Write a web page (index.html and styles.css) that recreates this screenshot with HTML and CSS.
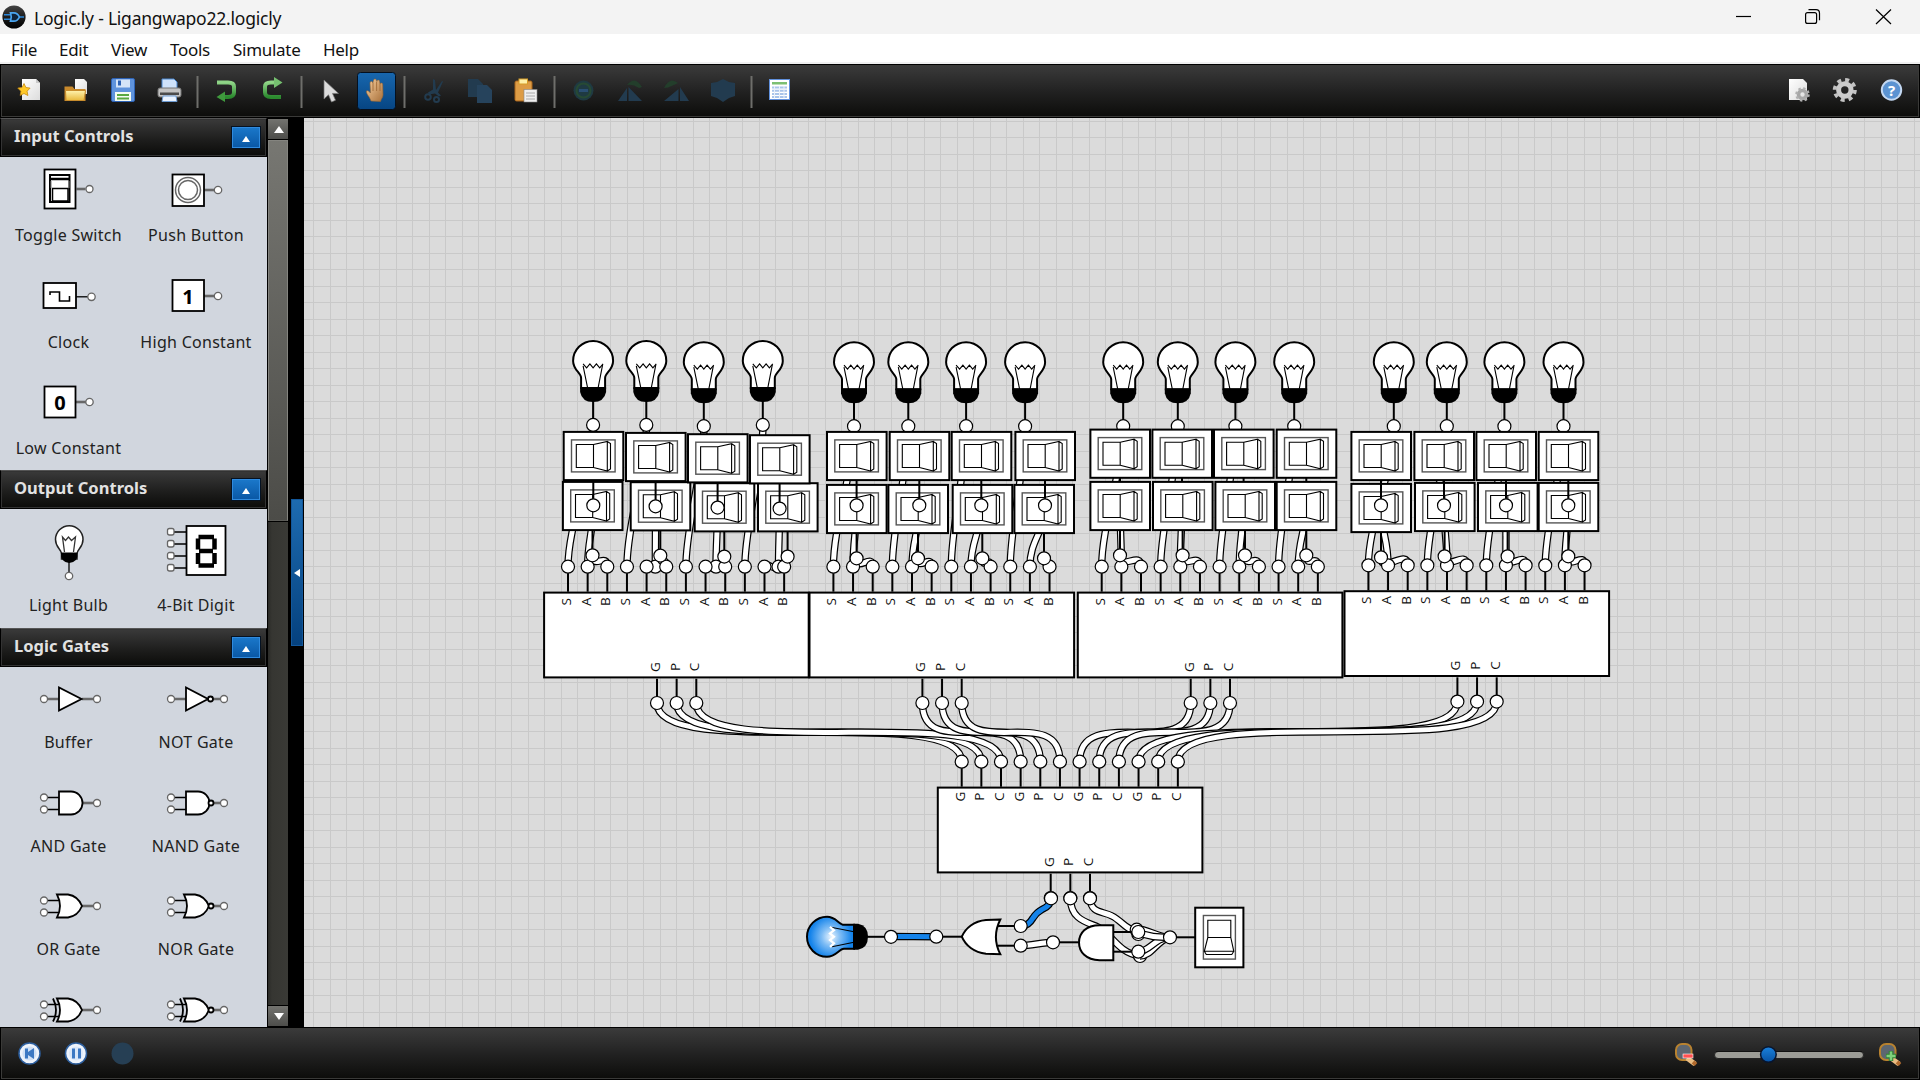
FILE: index.html
```html
<!DOCTYPE html>
<html lang="en">
<head>
<meta charset="utf-8">
<title>Logic.ly - Ligangwapo22.logicly</title>
<link rel="stylesheet" href="styles.css">
</head>
<body>
<div class="window">
  <header class="titlebar">
    <svg class="app-icon" viewBox="0 0 24 24" width="24" height="24">
      <defs><linearGradient id="app" x2="0" y2="1"><stop offset="0" stop-color="#444"/><stop offset=".5" stop-color="#1c1c1c"/><stop offset="1" stop-color="#000"/></linearGradient></defs>
      <circle cx="12" cy="12" r="11.6" fill="url(#app)"/>
      <path d="M2 9.7h6.5M2 14.3h6.5M17 12h5" stroke="#2b86d8" stroke-width="1.6" fill="none"/>
      <path d="M8.5 7.8h3.3c3 0 4.8 2.200 5.600 4.200-.8 2-2.600 4.200-5.600 4.200H8.500c1-2.800 1-5.600 0-8.400z" stroke="#4aa5f0" stroke-width="1.700" fill="#10243a"/>
    </svg>
    <span class="title">Logic.ly - Ligangwapo22.logicly</span>
    <span class="spacer"></span>
    <svg class="caption" viewBox="0 0 160 34" width="160" height="34" fill="none" stroke="#000" stroke-width="1.2">
      <path d="M0 16.500h15"/>
      <rect x="69.600" y="12.600" width="11" height="10.800" rx="2"/>
      <path d="M72.500 9.700h7.500q3.500 0 3.500 3.500v7"/>
      <path d="M140 9.500l15 14.500M155 9.500l-15 14.500"/>
    </svg>
  </header>
  <nav class="menubar">
    <span class="m-file">File</span><span class="m-edit">Edit</span><span class="m-view">View</span><span class="m-tools">Tools</span><span class="m-sim">Simulate</span><span class="m-help">Help</span>
  </nav>

  <div class="toolbar">
    <svg class="tools" viewBox="0 0 820 50" width="820" height="50">
      <defs>
        <linearGradient id="paper" x2="1" y2="1"><stop offset="0" stop-color="#fff"/><stop offset="1" stop-color="#dcdcdc"/></linearGradient>
        <linearGradient id="folder" x2="0" y2="1"><stop offset="0" stop-color="#fff3ae"/><stop offset="1" stop-color="#e8b93c"/></linearGradient>
        <linearGradient id="blue" x2="0" y2="1"><stop offset="0" stop-color="#1867ae"/><stop offset="1" stop-color="#064583"/></linearGradient>
        <linearGradient id="hand" x2="1" y2="1"><stop offset="0" stop-color="#f7cf9f"/><stop offset="1" stop-color="#a8703a"/></linearGradient>
        <linearGradient id="grn" x2="0" y2="1"><stop offset="0" stop-color="#8fd487"/><stop offset="1" stop-color="#2b8a2e"/></linearGradient>
      </defs>
      <!-- new -->
      <path d="M22 14h14l4 4v17H22z" fill="url(#paper)"/><path d="M36 14l4 4h-4z" fill="#c9c9c9"/>
      <path d="M24 18.500l1.900 4 4.200.6-3 3.100.8 4.300-3.900-2-3.800 2 .7-4.300-3.100-3.100 4.300-.6z" fill="#ffc928" stroke="#c88a10" stroke-width=".8"/>
      <!-- open -->
      <path d="M75 14h9l3 3v12H75z" fill="url(#paper)"/>
      <path d="M64.500 21.500h8l2 2.500h11v12H64.500z" fill="#c98a2c"/><path d="M65.500 25.500h20l-1.500 10H66z" fill="url(#folder)" stroke="#c78c2c"/>
      <!-- save -->
      <rect x="111.500" y="13.500" width="23" height="23" rx="1.500" fill="#5f93dc" stroke="#2d62b5"/>
      <rect x="116" y="14.500" width="14" height="8" fill="#d5e4f8"/><rect x="118" y="15.500" width="3" height="5" fill="#2d62b5"/>
      <rect x="115" y="27" width="16" height="9" fill="#f4fbf2"/><path d="M117 30h12M117 33.500h12" stroke="#58a840" stroke-width="2"/>
      <!-- print -->
      <path d="M162 14h12l3 3v9h-15z" fill="#cfe2fa" stroke="#4a87d0"/>
      <rect x="158" y="23" width="23" height="9" rx="2" fill="#c3c3c3" stroke="#777"/><rect x="160" y="27.500" width="19" height="2.500" fill="#4b4b4b"/>
      <path d="M163 31h13l1 5.500h-15z" fill="#eaf3ff" stroke="#6d9bd2"/>
      <g class="rule"><path d="M197.500 11v32M301.500 11v32M404.500 11v32M554.500 11v32M751.500 11v32"/></g>
      <!-- undo / redo -->
      <path d="M217 17.500h11q6 0 6 4v6q0 4.500-6 4.500h-4" fill="none" stroke="url(#grn)" stroke-width="4"/><path d="M225 26.500v10.500l-8.500-5z" fill="#3f9a3d"/>
      <path d="M281 32h-10q-6 0-6-4.500v-6q0-4 6-4h4" fill="none" stroke="url(#grn)" stroke-width="4"/><path d="M274 12v11l8.500-5.500z" fill="#76c070"/>
      <!-- pointer -->
      <path d="M324 15v19l4.500-4.200 3 7.200 4-1.800-3-6.800h6z" fill="#dcdcdc" stroke="#777" stroke-width=".7"/>
      <!-- pan -->
      <rect x="357.500" y="7.500" width="38" height="37" rx="3" fill="url(#blue)" stroke="#04101f"/>
      <path d="M371 36c-1-4-5-7-4.500-10 1.500-1 3 1 4 2l-.5-10c.3-2 2.500-2 2.800 0l.7-2.500c.4-2 2.700-2 2.900 0l.5 1c.6-2 2.600-2 2.800.5l.3 2c.8-1.500 2.800-1.200 2.700.8L383 30c-.3 3-2 4-2.500 6.500z" fill="url(#hand)" stroke="#9a6630" stroke-width=".6"/>
      <path d="M373 18v8M376.600 17v9M380 19v7" stroke="#a06b38" stroke-width=".9"/>
      <!-- disabled edit tools -->
      <g fill="#223b4f" stroke="none">
        <path d="M433 14l2 1 1 10 6-9 1 .5-5 11 3 3-2 1-4-3-6 1-1-2 5-3z"/><circle cx="428" cy="32" r="2.800" fill="none" stroke="#223b4f" stroke-width="2"/><circle cx="436.500" cy="34.500" r="2.500" fill="none" stroke="#223b4f" stroke-width="2"/>
        <path d="M468 14h10l5 5v13h-15z"/><path d="M477 20h10l5 5v13h-15z" fill="#26435c"/>
        <circle cx="583.500" cy="25.500" r="10" fill="#1f3a42"/><circle cx="583.500" cy="25.500" r="7" fill="none" stroke="#274a34" stroke-width="2"/><path d="M579 25.500h9" stroke="#2a4f73" stroke-width="3"/>
        <path d="M618 36l9-13v13zM628.500 22l13.500 14h-13.500z"/><path d="M627 20q8-10 15 2l-3 1q-6-4-12-3z" fill="#233e2b"/>
        <path d="M689 36l-9-14v14zM678.500 24L664 36h14.500z"/><path d="M678 18q-8-7-14 5l4-.5q5-2 10-4.500z" fill="#233e2b"/>
        <path d="M711 18l6-1 6-3 6 3 6 1v13l-6 2-6 4-6-4-6-2z"/>
      </g>
      <!-- paste -->
      <rect x="515" y="16" width="17" height="20" rx="1.500" fill="#dd9c45" stroke="#a9651b"/><rect x="519" y="14" width="8.500" height="5" fill="#fff0a8" stroke="#d79d28"/>
      <rect x="524" y="24.500" width="13" height="12.500" fill="#efefef" stroke="#888" stroke-width=".6"/><path d="M526 28h9M526 31h9M526 34h9" stroke="#aaa"/>
      <!-- truth table -->
      <rect x="769.500" y="14.500" width="20" height="20" fill="#fff" stroke="#6090dc"/><rect x="772" y="17" width="15" height="2.500" fill="#7cbf72"/>
      <path d="M772 22.500h15M772 25.700h15M772 28.900h15M772 32h15" stroke="#a9c4ea" stroke-width="2"/><path d="M774.500 21v12.500M779.500 21v12.500M784 21v12.500" stroke="#e8f0fb"/>
    </svg>
    <span class="spacer"></span>
    <svg class="tools" viewBox="0 0 120 50" width="120" height="50">
      <path d="M2 14h14l4 4v17H2z" fill="url(#paper)"/>
      <circle cx="15.500" cy="29.500" r="4" fill="none" stroke="#a7a7a7" stroke-width="3.600"/><circle cx="15.500" cy="29.500" r="6" fill="none" stroke="#b0b0b0" stroke-width="2.500" stroke-dasharray="2.350 2.350"/>
      <circle cx="57.800" cy="25" r="6.200" fill="none" stroke="#cbcbcb" stroke-width="5"/><circle cx="57.800" cy="25" r="10" fill="none" stroke="#c3c3c3" stroke-width="4" stroke-dasharray="3.930 3.930"/>
      <circle cx="104.500" cy="25" r="9.700" fill="#5b93d2" stroke="#c3d8f2" stroke-width="2"/><text x="104.500" y="30.500" class="help">?</text>
    </svg>
  </div>

  <main class="body">
    <aside class="library">
      <section class="group inputs">
        <h2>Input Controls<span class="fold"></span></h2>
        <div class="cells">
          <div class="cell"><svg viewBox="-32 -32 64 64"><path class="s2" d="M8.500 0h9"/><rect class="s" x="-23.500" y="-19.500" width="31" height="39"/><rect x="-18" y="-14" width="19.500" height="27" fill="#fff" stroke="#000" stroke-width="2"/><path d="M-18-10h20" stroke="#000" stroke-width="2.500"/><rect x="-15.500" y="-.5" width="15.500" height="12.500" fill="#fff" stroke="#000" stroke-width="1.500"/><path d="M-17-8v7M1-8v7" stroke="#777"/><circle class="p" cx="21.500" cy="0" r="3.500"/></svg><b>Toggle Switch</b></div>
          <div class="cell"><svg viewBox="-32 -32 64 64"><path class="s2" d="M8 1h10"/><rect class="s" x="-23.500" y="-14.500" width="31.500" height="31.500"/><circle class="t" cx="-8" cy="1" r="12.500"/><circle class="t" cx="-8" cy="1" r="9.500"/><circle class="p" cx="22" cy="1" r="3.700"/></svg><b>Push Button</b></div>
          <div class="cell"><svg viewBox="-32 -32 64 64"><path class="s1" stroke-width="2" d="M8 .8h12"/><rect class="s" x="-24.500" y="-13" width="32.500" height="25"/><path d="M-18-1v-3h9.500v9h10v-5" fill="none" stroke="#000" stroke-width="1.600"/><circle class="p" cx="23.500" cy=".8" r="3.700"/></svg><b>Clock</b></div>
          <div class="cell"><svg viewBox="-32 -32 64 64"><path class="s2" d="M8 0h10"/><rect class="s" x="-23.500" y="-16" width="31.500" height="31"/><text x="-8" y="7.500">1</text><circle class="p" cx="22" cy="0" r="3.700"/></svg><b>High Constant</b></div>
          <div class="cell"><svg viewBox="-32 -32 64 64"><path class="s2" d="M8 0h10"/><rect class="s" x="-23.500" y="-15.500" width="31" height="31"/><text x="-8" y="7.500">0</text><circle class="p" cx="21.500" cy="0" r="3.700"/></svg><b>Low Constant</b></div>
        </div>
      </section>
      <section class="group outputs">
        <h2>Output Controls<span class="fold"></span></h2>
        <div class="cells">
          <div class="cell"><svg viewBox="-32 -41 64 82"><path class="s1" stroke-width="2" d="M0 11v14"/><path d="M-7.500 4c0-5-6-6-6-14.500a13.700 13.700 0 0 1 27.500 0c0 8.500-6 9.500-6 14.500v5h-15.500z" fill="#fff" stroke="#222" stroke-width="1.500"/><path d="M-8 2.500h16.500q1 9.500-8.300 10.500q-9-1-8.200-10.500z"/><path d="M-4.500 2l-2-15 3 3.500 3-3.500 3 3.500 4-3.500-2 15" fill="none" stroke="#333" stroke-width="1.300"/><circle class="p" cx="0" cy="26" r="3.700"/></svg><b>Light Bulb</b></div>
          <div class="cell"><svg viewBox="-32 -41 64 82"><path class="s1" d="M-22-18h13M-22-6h13M-22 6h13M-22 18h13"/><rect class="s" x="-9.500" y="-24" width="39" height="49"/><g class="p"><rect x="-28.500" y="-21.500" width="6.500" height="6.500" rx="2"/><rect x="-28.500" y="-9.500" width="6.500" height="6.500" rx="2"/><rect x="-28.500" y="2.500" width="6.500" height="6.500" rx="2"/><rect x="-28.500" y="14.500" width="6.500" height="6.500" rx="2"/></g><g stroke="#000" stroke-width="4.500"><path d="M2.500-13h15.500M3 1h14M2.500 15.500h15.500M2-11.500v11M18.500-11.500v11M2 3v11M18.500 3v11"/></g></svg><b>4-Bit Digit</b></div>
        </div>
      </section>
      <section class="group gates">
        <h2>Logic Gates<span class="fold"></span></h2>
        <div class="cells">
          <div class="cell"><svg viewBox="-32 -32 64 64"><path class="s2" d="M-22 0h12M13 0h12"/><path class="s" d="M-10-11.500V11.500L12.500 0z"/><circle class="p" cx="-25" cy="0" r="3.500"/><circle class="p" cx="28" cy="0" r="3.500"/></svg><b>Buffer</b></div>
          <div class="cell"><svg viewBox="-32 -32 64 64"><path class="s2" d="M-22 0h12M13 0h12"/><path class="s" d="M-10-11.500V11.500L12 0z"/><circle class="s" cx="14.500" cy="0" r="2.500"/><circle class="p" cx="-25" cy="0" r="3.500"/><circle class="p" cx="28" cy="0" r="3.500"/></svg><b>NOT Gate</b></div>
          <div class="cell"><svg viewBox="-32 -32 64 64"><path class="s2" d="M13 0h12"/><path class="s1" d="M-22-5.500h12M-22 6.500h12"/><path class="s" d="M-10-11.500H2A11.500 11.500 0 0 1 2 11.500H-10z"/><circle class="p" cx="-25" cy="-5.500" r="3.500"/><circle class="p" cx="-25" cy="6.500" r="3.500"/><circle class="p" cx="28" cy="0" r="3.500"/></svg><b>AND Gate</b></div>
          <div class="cell"><svg viewBox="-32 -32 64 64"><path class="s2" d="M13 0h12"/><path class="s1" d="M-22-5.500h12M-22 6.500h12"/><path class="s" d="M-10-11.500H2A11.500 11.500 0 0 1 2 11.500H-10z"/><circle class="s" cx="15" cy="0" r="2.500"/><circle class="p" cx="-25" cy="-5.500" r="3.500"/><circle class="p" cx="-25" cy="6.500" r="3.500"/><circle class="p" cx="28" cy="0" r="3.500"/></svg><b>NAND Gate</b></div>
          <div class="cell"><svg viewBox="-32 -32 64 64"><path class="s2" d="M13 0h12"/><path class="s1" d="M-22-5.500h14M-22 6.500h14"/><path class="s" d="M-12-11.500H-1Q9-10 13 0Q9 10-1 11.500H-12Q-6 0-12-11.500z"/><circle class="p" cx="-25" cy="-5.500" r="3.500"/><circle class="p" cx="-25" cy="6.500" r="3.500"/><circle class="p" cx="28" cy="0" r="3.500"/></svg><b>OR Gate</b></div>
          <div class="cell"><svg viewBox="-32 -32 64 64"><path class="s2" d="M13 0h12"/><path class="s1" d="M-22-5.500h14M-22 6.500h14"/><path class="s" d="M-12-11.500H-1Q9-10 13 0Q9 10-1 11.500H-12Q-6 0-12-11.500z"/><circle class="s" cx="15" cy="0" r="2.500"/><circle class="p" cx="-25" cy="-5.500" r="3.500"/><circle class="p" cx="-25" cy="6.500" r="3.500"/><circle class="p" cx="28" cy="0" r="3.500"/></svg><b>NOR Gate</b></div>
          <div class="cell"><svg viewBox="-32 -32 64 64"><path class="s2" d="M13 0h12"/><path class="s1" d="M-22-5.500h14M-22 6.500h14"/><path class="s" d="M-12-11.500H-1Q9-10 13 0Q9 10-1 11.500H-12Q-6 0-12-11.500z"/><path d="M-16-11.500q6 11.500 0 23" fill="none" stroke="#000" stroke-width="1.800"/><circle class="p" cx="-25" cy="-5.500" r="3.500"/><circle class="p" cx="-25" cy="6.500" r="3.500"/><circle class="p" cx="28" cy="0" r="3.500"/></svg></div>
          <div class="cell"><svg viewBox="-32 -32 64 64"><path class="s2" d="M13 0h12"/><path class="s1" d="M-22-5.500h14M-22 6.500h14"/><path class="s" d="M-12-11.500H-1Q9-10 13 0Q9 10-1 11.500H-12Q-6 0-12-11.500z"/><path d="M-16-11.500q6 11.500 0 23" fill="none" stroke="#000" stroke-width="1.800"/><circle class="s" cx="15" cy="0" r="2.500"/><circle class="p" cx="-25" cy="-5.500" r="3.500"/><circle class="p" cx="-25" cy="6.500" r="3.500"/><circle class="p" cx="28" cy="0" r="3.500"/></svg></div>
        </div>
      </section>
    </aside>
    <div class="scrollbar"><span class="btn up"></span><span class="thumb"></span><span class="track"></span><span class="btn down"></span></div>
    <div class="divider"><span class="grip"></span></div>
    <div class="canvas"><svg id="circuit" viewBox="304 118 1616 909" width="1616" height="909">
      <defs>
        <radialGradient id="lit" cx="0" cy="4" r="21" gradientUnits="userSpaceOnUse"><stop offset="0" stop-color="#eaf5ff"/><stop offset=".45" stop-color="#7dbcf5"/><stop offset="1" stop-color="#1483ea"/></radialGradient>
        <g id="bulb-base">
          <path class="line" d="M0 40V58"/>
          <path d="M-13 26.300H13V31Q11 41 0 41Q-11 41-13 31z"/>
          <circle class="pin" cy="64" r="6.500"/>
        </g>
        <path id="glass" d="M-12 27V17C-12 12-20 9-20 0A20 20 0 0 1 20 0C20 9 12 12 12 17V27z"/>
        <path id="filament" d="M-10 3l3.500 4 3.300-4 3.200 4 3.300-4L6.600 7 10 3"/>
        <path id="legs" d="M-10 5l4.500 22M9.500 4l-4.500 23"/>
        <g id="bulb">
          <use href="#glass" class="shell"/><use href="#filament" class="thin"/><use href="#legs" class="thin"/><use href="#bulb-base"/>
        </g>
        <g id="bulb-lit">
          <use href="#glass" class="shell-lit"/><use href="#legs" class="thin"/><use href="#filament" class="glow"/><use href="#bulb-base"/>
        </g>
        <g id="switch">
          <rect class="box" x=".7" y=".9" width="59.600" height="48.200"/>
          <rect class="panel" x="8.500" y="8.900" width="43.600" height="32"/>
          <path class="thin" d="M13.300 13.500H30.500V36.500H13.300zM30.500 13.500L44.300 10.500V40L30.500 36.500M44.300 10.500L47.500 12.500V38L44.300 40"/>
        </g>
        <g id="switch-pin"><path class="line" d="M30.300 49V68"/><circle class="pin" cx="30.300" cy="74.300" r="6.500"/></g>
      </defs>
    </svg></div>
  </main>

  <footer class="statusbar">
    <svg viewBox="0 0 140 50" width="140" height="50">
      <g fill="#eef3fb" stroke="#2d5f9f" stroke-width="1.500"><circle cx="28.500" cy="25.500" r="10.500"/><circle cx="75" cy="25.500" r="10.500"/></g>
      <circle cx="28.500" cy="25.500" r="7" fill="#cfe0f6"/><circle cx="75" cy="25.500" r="7" fill="#dbe7f8"/>
      <path d="M24 20.500h3v3.500l6-4v11l-6-4v3.500h-3zM71 20.500h3v10h-3zM77 20.500h3v10h-3z" fill="#3c78c3"/>
      <circle cx="121.500" cy="25.500" r="11" fill="#263f54"/>
    </svg>
    <span class="spacer"></span>
    <svg viewBox="0 0 250 50" width="250" height="50">
      <defs><linearGradient id="knob" x2="0" y2="1"><stop offset="0" stop-color="#1b82dc"/><stop offset="1" stop-color="#0752a4"/></linearGradient></defs>
      <g id="lens"><rect x="7" y="16" width="15.500" height="16" rx="6" fill="#5d6670" stroke="#b8822f" stroke-width="2"/><path d="M18 30l8 6" stroke="#e9bd83" stroke-width="5"/><path d="M24 34l3 2.500" stroke="#b26a2d" stroke-width="4"/></g>
      <rect x="14" y="26" width="10" height="4" fill="#ff5050" stroke="#fff" stroke-width=".6"/>
      <rect x="45.500" y="23.500" width="149" height="7" rx="3.500" fill="#9c9c96" stroke="#222"/><path d="M47 23.500h146" stroke="#111"/>
      <circle cx="99.400" cy="26.500" r="7.800" fill="url(#knob)" stroke="#08152e" stroke-width="1.500"/>
      <use href="#lens" x="204"/><path d="M222 23v10M217 28h10" stroke="#2f7e32" stroke-width="4.500"/><path d="M222 23.500v9M217.500 28h9" stroke="#7fd07b" stroke-width="2.500"/>
    </svg>
  </footer>
</div>
<script src="circuit.js"></script>
</body>
</html>
```
FILE: styles.css
```css
* { box-sizing: border-box; }
body { margin: 0; font-family: "Noto Sans", sans-serif; overflow: hidden; }
svg { display: block; flex: none; }
.window { width: 1920px; height: 1080px; display: flex; flex-direction: column; background: #000; }
.spacer { flex: 1; }

.titlebar { height: 34px; flex: none; display: flex; align-items: center; background: #f3f3f3; padding-left: 2px; color: #111; }
.titlebar .title { margin-left: 8px; font-size: 17.500px; letter-spacing: -.22px; padding-top: 1px; }
.caption { margin-right: 24px; }

.menubar { height: 30px; flex: none; display: flex; align-items: center; background: #fff; border-bottom: 2px solid #f0f0f0; padding: 2px 0 0 11px; font-size: 17px; color: #111; }
.menubar span { letter-spacing: -.28px; }
.m-file { width: 48px; } .m-edit { width: 52px; } .m-view { width: 59px; } .m-tools { width: 63px; } .m-sim { width: 90px; }

.toolbar, .statusbar { flex: none; display: flex; border: 1px solid #000; box-shadow: inset 0 0 0 1px #3a3a38; background: linear-gradient(#3b3b3b, #222 50%, #0c0c0a); }
.toolbar { height: 54px; padding: 0 12px 0 0; }
.toolbar > svg:first-child { margin-left: -1px; }
.statusbar { height: 53px; }
.rule { stroke: #6e6e6b; stroke-width: 2; }
.help { font: bold 15px "Noto Sans", sans-serif; fill: #fff; text-anchor: middle; }

.body { height: 909px; flex: none; display: flex; }
.library { width: 267px; height: 909px; overflow: hidden; background: #d1d6de; }
.group h2 { margin: 0; height: 39px; display: flex; align-items: center; justify-content: space-between; padding: 0 6px 4px 13px; font-size: 16.500px; font-weight: 700; letter-spacing: .03px; color: #e2e2e2; background: linear-gradient(#3a3a3a, #1c1c1b 60%, #0b0b09); border: 1px solid #000; border-top-color: #555; box-shadow: inset 0 0 0 1px #333; }
.fold { width: 28px; height: 21px; background: linear-gradient(#1a77c9, #0a58a6); border: 1px solid #2f8ade; outline: 1px solid #051222; display: flex; align-items: center; justify-content: center; margin-top: 3px; }
.fold::before { content: ""; border: 4px solid transparent; border-top: 0; border-bottom: 6px solid #fff; margin-top: 3px; }
.cells { display: grid; grid-template-columns: 127px 128px; padding-left: 5px; overflow: hidden; }
.cell { display: flex; flex-direction: column; align-items: center; }
.cell svg { width: 64px; height: 64px; margin-left: -1px; }
.cell b { font-weight: 400; font-size: 16px; line-height: 28px; letter-spacing: .28px; color: #222; white-space: nowrap; }
.inputs .cells { height: 313px; grid-auto-rows: 106.500px; }
.outputs .cells { height: 119px; }
.outputs .cell svg { height: 82px; margin-left: 0; }
.gates .cells { grid-auto-rows: 103.600px; }
.gates .cell svg { margin-left: 0; }
.gates .cell b { line-height: 23px; }
.cell text { font: bold 20px "Noto Sans", sans-serif; text-anchor: middle; }
.s { fill: #fff; stroke: #000; stroke-width: 1.800; }
.s1 { fill: none; stroke: #000; stroke-width: 1.300; }
.s2 { fill: none; stroke: #686868; stroke-width: 2.600; }
.t { fill: none; stroke: #666; stroke-width: 1.500; }
.p { fill: #fff; stroke: #666; stroke-width: 1.300; }

.scrollbar { width: 21px; display: flex; flex-direction: column; background: #000; padding: 1px 0 1px 1px; }
.btn { height: 20px; margin: 0; padding-left: 1px; background: linear-gradient(#73736f, #4d4d4a); display: flex; align-items: center; justify-content: center; }
.up::before { content: ""; border: 5px solid transparent; border-top: 0; border-bottom: 7px solid #fff; }
.down::before { content: ""; border: 5px solid transparent; border-bottom: 0; border-top: 7px solid #fff; }
.thumb { height: 381px; margin-top: 1px; background: linear-gradient(#777772, #4c4c48); border: 1px solid #84847f; border-bottom-color: #5b5b57; }
.track { flex: 1; margin: 1px 0; background: linear-gradient(90deg, #2b2b28, #363632 20%, #3a3a36); }
.divider { width: 16px; background: #000; display: flex; align-items: flex-start; padding: 381px 1px 0 3px; }
.grip { width: 12px; height: 147px; background: linear-gradient(#1d6bb0, #05417e); border: 1px solid #12579b; display: flex; align-items: center; justify-content: center; }
.grip::before { content: ""; border: 4.500px solid transparent; border-left: 0; border-right: 6px solid #fff; }

.canvas { width: 1616px; height: 909px; background-color: #dbdbdb;
  background-image: linear-gradient(90deg, #c9c9c9 1px, transparent 1px, transparent 16px, #c9c9c9 16px, #c9c9c9 17px, transparent 17px), linear-gradient(#c9c9c9 1px, transparent 1px, transparent 16px, #c9c9c9 16px, #c9c9c9 17px, transparent 17px);
  background-size: 33px 33px; background-position: -7px 3px; }
.line { fill: none; stroke: #000; stroke-width: 2; }
.box, .shell { fill: #fff; stroke: #000; stroke-width: 2; }
.shell-lit { fill: url(#lit); stroke: #000; stroke-width: 2; }
.glow { fill: none; stroke: #fff; stroke-width: 2.200; }
.panel { fill: none; stroke: #555; stroke-width: 1.400; }
.thin { fill: none; stroke: #000; stroke-width: 1.100; }
.pin { fill: #fff; stroke: #000; stroke-width: 1.200; }
.wire-edge { fill: none; stroke: #000; stroke-width: 7.400; }
.wire { fill: none; stroke: #fff; stroke-width: 5; }
.wire.on { stroke: #1483ea; }
.tag { font: 13.500px "Open Sans", "Noto Sans", sans-serif; text-anchor: middle; fill: #111; }
```
FILE: circuit.js
```js
const svg = document.getElementById('circuit');
const out = [];
const add = s => out.push(s);

function tube(d, on) {
  add(`<path class="wire-edge" d="${d}"/><path class="wire${on ? ' on' : ''}" d="${d}"/>`);
}
// Wires leave each pin along its own axis: d1/d2 are unit directions.
function wire(x1, y1, x2, y2, o = {}) {
  const [ax, ay] = o.d1 || [0, 1], [bx, by] = o.d2 || [0, -1];
  const h = o.h || 3.45 * Math.sqrt(Math.hypot(x2 - x1, y2 - y1));
  tube(`M${x1} ${y1}C${x1 + ax * h} ${y1 + ay * h} ${x2 + bx * h} ${y2 + by * h} ${x2} ${y2}`, o.on);
}
const pin = (x, y) => add(`<circle class="pin" cx="${x}" cy="${y}" r="6.5"/>`);
const line = (x1, y1, x2, y2) => add(`<path class="line" d="M${x1} ${y1}L${x2} ${y2}"/>`);
const tag = (x, y, t) => add(`<text class="tag" transform="translate(${x + 3} ${y}) rotate(-90)">${t}</text>`);

const STEP = 19.65;
function chip(x, y, tops) {
  add(`<rect class="box" x="${x + .8}" y="${y + .9}" width="264.6" height="84.8"/>`);
  [...tops].forEach((t, i) => {
    const px = x + 24.7 + i * STEP;
    line(px, y, px, y - 20); pin(px, y - 25); tag(px, y + 10, t);
  });
  [...'GPC'].forEach((t, i) => {
    const px = x + 113.7 + i * STEP;
    line(px, y + 87, px, y + 106); pin(px, y + 111.3); tag(px, y + 75.3, t);
  });
}

const groups = [
  { x: 543.3, y: 591.7, bulbs: [[593.3, 424.7], [646.5, 424.7], [704, 426], [763, 424.7]],
    top: [[563, 431], [625.3, 432], [687.3, 433.3], [749.3, 434.3]],
    low: [[562.2, 481], [630, 481.3], [694, 482.3], [757.3, 482.3]],
    joints: [null, 655.3, 716, 778.5] },
  { x: 808.7, y: 591.7, bulbs: [[854.2, 426], [908.5, 426], [966.3, 426], [1025.3, 426]],
    top: [[826.3, 431], [889, 431], [951, 431], [1014.7, 431]],
    low: [[826.3, 484], [887.7, 484], [952, 484], [1013.7, 484]] },
  { x: 1077, y: 591.7, lowFirst: false, bulbs: [[1123.4, 426], [1178, 426], [1235.6, 426], [1294.4, 426]],
    top: [[1089.7, 428.7], [1151.7, 428.7], [1213.3, 428.7], [1276, 428.7]],
    low: [[1089.7, 481], [1152.3, 481], [1214.7, 481], [1276, 481]] },
  { x: 1343.7, y: 590.3, bulbs: [[1394, 426], [1447, 426], [1504.6, 426], [1563.7, 426]],
    top: [[1350.7, 431], [1413.7, 431], [1475.7, 431], [1538, 431]],
    low: [[1350.7, 483], [1414.3, 482], [1477.3, 482], [1538, 482]] },
];

// lookahead wiring between the four adders and the group unit
const root = { x: 937, y: 786.7 };
groups.forEach((g, k) => {
  for (let i = 0; i < 3; i++)
    wire(g.x + 113.7 + i * STEP, g.y + 111.3, root.x + 24.7 + (k * 3 + i) * STEP, root.y - 25, { h: 60 });
});

groups.forEach(g => {
  for (let i = 0; i < 4; i++) {
    const px = n => g.x + 24.7 + (i * 3 + n) * STEP, py = g.y - 25;
    const [tx, ty] = g.top[i], [lx, ly] = g.low[i];
    wire(g.bulbs[i][0], g.bulbs[i][1], px(0), py);
    const j = g.joints && g.joints[i];
    if (j) {
      wire(tx + 30.3, ty + 74.3, j, py, { h: 20 });
      wire(px(1), py, j, py, { h: 6, d1: [0, -1], d2: [0, 1] });
      pin(j, py);
    } else wire(tx + 30.3, ty + 74.3, px(1), py);
    wire(lx + 30.3, ly + 74.3, px(2), py);
  }
});
groups.forEach(g => chip(g.x, g.y, 'SABSABSABSAB'));
chip(root.x, root.y, 'GPCGPCGPCGPC');
const place = (id, x, y) => add(`<use href="#${id}" x="${x}" y="${y}"/>`);
groups.forEach(g => {
  g.bulbs.forEach(([x, y]) => place('bulb', x - .2, y - 63.8));
  const rows = g.lowFirst === false ? [g.top, g.low] : [g.low, g.top];
  rows.forEach(r => r.forEach(([x, y]) => { place('switch', x, y); place('switch-pin', x, y); }));
});

// carry-out stage
const L = [-1, 0], R = [1, 0];
tube('M1051 898.3Q1051 906 1042 909.500Q1037 912 1033 918Q1028 926.500 1020.700 926', true);
wire(1020.7, 945.7, 1053, 942.3, { d1: R, d2: L, h: 10 });
wire(891, 936.5, 936.3, 936.7, { d1: R, d2: L, on: true });
tube('M1070.3 898.3C1071 920 1087 922 1098 927C1112 934 1118 953 1140 956');
tube('M1090 898.3C1091 914 1103 911 1112 916C1122 921 1126 930 1136.700 931');
pin(1136.7, 929.7); pin(1138.3, 934); pin(1140, 956);
tube('M1140 956C1152 956 1157 940 1169.700 937.300');
tube('M1138.3 951.7C1150 951.700 1154 938 1169.700 937.300');
tube('M1136.7 929C1148 929 1158 937.300 1169.700 937.300');
tube('M1138.3 932C1148 937 1158 937.300 1169.700 937.300');
line(998, 926, 1015, 926); line(998, 945.7, 1015, 945.7); line(942, 936.7, 963, 936.7);
line(1059, 942.3, 1078, 942.3); line(1113, 932, 1133, 932); line(1113, 951.7, 1133, 951.7);
add('<path class="box" d="M1000.300 919.500L986 920C974 921 965.500 928 961.800 936.700C965.500 945.500 974 952.500 986 953.700L1000.300 954.300Q991.500 937 1000.300 919.500z"/>');
add('<path class="box" d="M1113.300 925.200H1099.500C1086 925.200 1079 933 1079 942.500S1086 960 1099.500 960.300H1113.300z"/>');
[[1051, 898.3], [1070.3, 898.3], [1090, 898.3], [1020.7, 926], [1020.7, 945.7], [1053, 942.3], [936.3, 936.7], [1138.3, 932], [1138.3, 951.7]].forEach(p => pin(...p));
add('<use href="#bulb-lit" transform="translate(827 936.800) rotate(-90)"/>');
add('<g transform="translate(1244.300 907) rotate(90)"><use href="#switch"/><use href="#switch-pin"/></g>');
svg.insertAdjacentHTML('beforeend', out.join(''));
```
